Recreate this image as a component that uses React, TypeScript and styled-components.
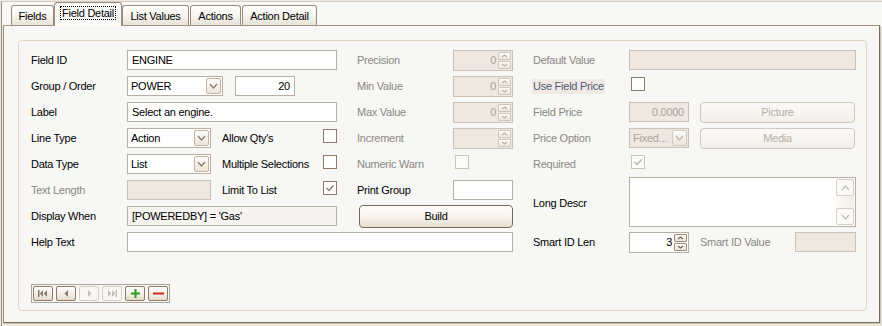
import React from 'react';
import styled, { createGlobalStyle, css } from 'styled-components';

const GlobalStyle = createGlobalStyle`
  html, body { margin: 0; padding: 0; background: #ebe8df; }
  body {
    font-family: "Liberation Sans", Arial, sans-serif;
    font-size: 11px;
    letter-spacing: -0.25px;
    color: #000;
  }
  * { box-sizing: border-box; }
`;

const GRAY = '#8a8783';

const Window = styled.div`
  width: 882px;
  height: 326px;
  display: flex;
  flex-direction: column;
  padding: 1px 0 0 1px;
  background: #ebe8df;
`;

const Surface = styled.div`
  flex: 1;
  display: flex;
  flex-direction: column;
  border-top: 1px solid #d4ccc1;
  border-left: 1px solid #9d8f7e;
  padding: 0 2px 3px 1px;
  background: linear-gradient(#f8f8f7, #f8f8f7) top / 100% 24px no-repeat, #ebe8df;
`;

const TabStrip = styled.div`
  height: 23px;
  display: flex;
  align-items: flex-end;
  gap: 1px;
  padding-left: 8px;
  position: relative;
  z-index: 1;
`;

const Tab = styled.div<{ $w: number; $active?: boolean }>`
  width: ${(p) => p.$w}px;
  height: 20px;
  display: flex;
  align-items: center;
  justify-content: center;
  border: 1px solid #9c8c78;
  border-bottom: none;
  border-radius: 3px 3px 0 0;
  background: linear-gradient(#ffffff, #f5f3ee 55%, #e7e2d6);
  white-space: nowrap;
  ${(p) =>
    p.$active &&
    css`
      width: ${p.$w + 2}px;
      height: 24px;
      margin: 0 -1px -1px;
      padding-bottom: 3px;
      background: #fbfbfa;
    `}
`;

const FocusText = styled.span`
  outline: 1px dotted #000;
  outline-offset: 0;
  padding: 0 1px;
`;

const Panel = styled.div`
  flex: 1;
  display: flex;
  background: #f7f7f6;
  border: 1px solid #a09281;
  border-right-color: #7c6c5a;
  border-bottom-color: #7c6c5a;
  box-shadow: 1px 1px 0 #cdc4b6;
  padding: 14px 12px 11px 14px;
`;

const GroupBox = styled.div`
  flex: 1;
  display: flex;
  flex-direction: column;
  border: 1px solid #e3d7c3;
  border-radius: 4px;
  padding: 6px 0 0 12px;
`;

const Form = styled.div`
  display: grid;
  grid-template-columns: 96px 210px 20px 96px 60px 20px 96px 227px;
  grid-auto-rows: 26px;
  align-items: center;
`;

const Slot = styled.div<{ $c: number; $r: number; $span?: number; $rows?: number; $top?: boolean }>`
  grid-column: ${(p) => p.$c} / span ${(p) => p.$span ?? 1};
  grid-row: ${(p) => p.$r} / span ${(p) => p.$rows ?? 1};
  display: flex;
  align-items: center;
  align-self: ${(p) => (p.$top ? 'start' : 'center')};
  min-width: 0;
`;

const Label = styled.span<{ $disabled?: boolean; $highlight?: boolean }>`
  white-space: nowrap;
  color: ${(p) => (p.$disabled ? GRAY : '#000')};
  ${(p) =>
    p.$highlight &&
    css`
      color: #4f5873;
      background: #efebe4;
      margin-left: -1px;
      padding: 1px 1px 2px;
    `}
`;

const InlineLabel = styled(Label)<{ $grow?: boolean }>`
  margin-left: 11px;
  flex: ${(p) => (p.$grow ? 1 : 'none')};
`;

type Variant = 'normal' | 'readonly' | 'disabled';

const boxBg = (v: Variant = 'normal') =>
  v === 'disabled' ? '#eee8e1' : v === 'readonly' ? '#f5f4f1' : '#fff';

const TextBox = styled.div<{ $w?: number; $variant?: Variant; $right?: boolean; $ml?: number }>`
  flex: none;
  width: ${(p) => (p.$w ? `${p.$w}px` : '100%')};
  height: 20px;
  margin-left: ${(p) => p.$ml ?? 0}px;
  display: flex;
  align-items: center;
  justify-content: ${(p) => (p.$right ? 'flex-end' : 'flex-start')};
  padding: 0 4px;
  border: 1px solid ${(p) => (p.$variant === 'disabled' ? '#cbc2b7' : '#b8afa4')};
  background: ${(p) => boxBg(p.$variant)};
  color: ${(p) => (p.$variant === 'disabled' ? '#aaa39a' : '#000')};
  white-space: nowrap;
  overflow: hidden;
`;

const SelectBox = styled.div<{ $w: number; $disabled?: boolean }>`
  flex: none;
  width: ${(p) => p.$w}px;
  height: 20px;
  display: flex;
  align-items: center;
  padding: 0 1px 0 3px;
  border: 1px solid ${(p) => (p.$disabled ? '#cbc2b7' : '#b8afa4')};
  background: ${(p) => (p.$disabled ? '#eee8e1' : '#fff')};
  color: ${(p) => (p.$disabled ? '#aaa39a' : '#000')};
`;

const SelectText = styled.span`
  flex: 1;
  white-space: nowrap;
  overflow: hidden;
`;

const DropButton = styled.span<{ $disabled?: boolean }>`
  width: 15px;
  height: 16px;
  display: flex;
  align-items: center;
  justify-content: center;
  border: 1px solid ${(p) => (p.$disabled ? '#d3cbc0' : '#c3b39f')};
  border-radius: 2px;
  background: linear-gradient(#fdfcfa, #ece5d8);
`;

const Spinner = styled.div<{ $disabled?: boolean }>`
  flex: none;
  width: 60px;
  height: 21px;
  display: flex;
  align-items: center;
  padding: 0 1px 0 3px;
  border: 1px solid ${(p) => (p.$disabled ? '#cbc2b7' : '#b8afa4')};
  background: ${(p) => (p.$disabled ? '#eee8e1' : '#fff')};
  color: ${(p) => (p.$disabled ? '#aaa39a' : '#000')};
`;

const SpinValue = styled.span`
  flex: 1;
  text-align: right;
  padding-right: 2px;
`;

const SpinColumn = styled.span`
  display: flex;
  flex-direction: column;
  gap: 1px;
`;

const SpinButton = styled.span<{ $disabled?: boolean }>`
  width: 13px;
  height: 8px;
  display: flex;
  align-items: center;
  justify-content: center;
  border: 1px solid ${(p) => (p.$disabled ? '#cfc6bb' : '#9f8c77')};
  border-radius: 1px;
  background: linear-gradient(#fdfcfa, #ece5d8);
`;

const CheckBox = styled.span<{ $disabled?: boolean; $ml?: number }>`
  flex: none;
  width: 14px;
  height: 14px;
  margin-left: ${(p) => p.$ml ?? 0}px;
  margin-bottom: 4px;
  display: flex;
  align-items: center;
  justify-content: center;
  border: 1px solid ${(p) => (p.$disabled ? '#cdc4b8' : '#8e7b67')};
  background: ${(p) => (p.$disabled ? '#fbfbfa' : '#fff')};
`;

const PushButton = styled.div<{ $w: number; $h?: number; $disabled?: boolean; $ml?: number }>`
  flex: none;
  width: ${(p) => p.$w}px;
  height: ${(p) => p.$h ?? 21}px;
  margin-left: ${(p) => p.$ml ?? 0}px;
  display: flex;
  align-items: center;
  justify-content: center;
  border: 1px solid ${(p) => (p.$disabled ? '#d0c7bb' : '#7d6a56')};
  border-radius: 4px;
  background: ${(p) =>
    p.$disabled ? 'linear-gradient(#fbfaf8, #f2efe9)' : 'linear-gradient(#ffffff, #f4f0e7 60%, #e6dfcf)'};
  color: ${(p) => (p.$disabled ? '#b6afa5' : '#000')};
`;

const TextArea = styled.div`
  width: 100%;
  height: 50px;
  display: flex;
  justify-content: flex-end;
  padding: 1px 1px 1px 0;
  border: 1px solid #b8afa4;
  background: #fff;
`;

const ScrollBar = styled.div`
  width: 18px;
  display: flex;
  flex-direction: column;
  justify-content: space-between;
  background: linear-gradient(90deg, #fbfaf7, #f2eee6);
`;

const ScrollButton = styled.span`
  width: 18px;
  height: 17px;
  display: flex;
  align-items: center;
  justify-content: center;
  border: 1px solid #d6cfc5;
  border-radius: 2px;
  background: #fbfaf8;
`;

const NavBar = styled.div`
  margin-top: 29px;
  align-self: flex-start;
  display: flex;
  gap: 3px;
  padding: 1px;
  border: 1px solid #aba59c;
`;

const NavButton = styled.span<{ $disabled?: boolean }>`
  width: 20px;
  height: 15px;
  display: flex;
  align-items: center;
  justify-content: center;
  border: 1px solid ${(p) => (p.$disabled ? '#d6cfc5' : '#8e7a66')};
  border-radius: 2px;
  background: ${(p) => (p.$disabled ? '#f8f7f4' : 'linear-gradient(#ffffff, #f1ece2 60%, #e4dccd)')};
`;

const Chevron = ({ dir = 'down', color = '#8a7a68', w = 9, h = 6 }: { dir?: 'up' | 'down'; color?: string; w?: number; h?: number }) => (
  <svg width={w} height={h} viewBox={`0 0 ${w} ${h}`}>
    <polyline
      points={
        dir === 'down'
          ? `1,1 ${w / 2},${h - 1} ${w - 1},1`
          : `1,${h - 1} ${w / 2},1 ${w - 1},${h - 1}`
      }
      fill="none"
      stroke={color}
      strokeWidth="1.2"
    />
  </svg>
);

const Tick = ({ color }: { color: string }) => (
  <svg width="10" height="10" viewBox="0 0 10 10">
    <polyline points="1.5,5 4,7.5 8.5,2.5" fill="none" stroke={color} strokeWidth="1.3" />
  </svg>
);

const Select = ({ w, value, disabled }: { w: number; value: string; disabled?: boolean }) => (
  <SelectBox $w={w} $disabled={disabled}>
    <SelectText>{value}</SelectText>
    <DropButton $disabled={disabled}>
      <Chevron color={disabled ? '#bdb4a8' : '#8a7a68'} />
    </DropButton>
  </SelectBox>
);

const Spin = ({ value, disabled }: { value: string; disabled?: boolean }) => {
  const glyph = disabled ? '#b9b0a4' : '#6f604f';
  return (
    <Spinner $disabled={disabled}>
      <SpinValue>{value}</SpinValue>
      <SpinColumn>
        <SpinButton $disabled={disabled}>
          <Chevron dir="up" w={7} h={4} color={glyph} />
        </SpinButton>
        <SpinButton $disabled={disabled}>
          <Chevron w={7} h={4} color={glyph} />
        </SpinButton>
      </SpinColumn>
    </Spinner>
  );
};

const Check = ({ checked, disabled, ml }: { checked?: boolean; disabled?: boolean; ml?: number }) => (
  <CheckBox $disabled={disabled} $ml={ml}>
    {checked && <Tick color={disabled ? '#b9b0a3' : '#8a7866'} />}
  </CheckBox>
);

type NavIcon = 'first' | 'prev' | 'next' | 'last' | 'add' | 'remove';

const NavGlyph = ({ kind, color }: { kind: NavIcon; color: string }) => {
  switch (kind) {
    case 'first':
      return (
        <svg width="10" height="7" viewBox="0 0 10 7" fill={color}>
          <rect x="0" y="0" width="1.5" height="7" />
          <polygon points="5,0 1.8,3.5 5,7" />
          <polygon points="9,0 5.8,3.5 9,7" />
        </svg>
      );
    case 'prev':
      return (
        <svg width="5" height="7" viewBox="0 0 5 7" fill={color}>
          <polygon points="4,0 0.5,3.5 4,7" />
        </svg>
      );
    case 'next':
      return (
        <svg width="5" height="7" viewBox="0 0 5 7" fill={color}>
          <polygon points="1,0 4.5,3.5 1,7" />
        </svg>
      );
    case 'last':
      return (
        <svg width="10" height="7" viewBox="0 0 10 7" fill={color}>
          <polygon points="1,0 4.2,3.5 1,7" />
          <polygon points="5,0 8.2,3.5 5,7" />
          <rect x="8.5" y="0" width="1.5" height="7" />
        </svg>
      );
    case 'add':
      return (
        <svg width="9" height="9" viewBox="0 0 9 9" fill="#2e9a1f">
          <rect x="3.5" y="0" width="2" height="9" />
          <rect x="0" y="3.5" width="9" height="2" />
        </svg>
      );
    default:
      return (
        <svg width="11" height="3" viewBox="0 0 11 3" fill="#d4241d">
          <rect x="0" y="0.5" width="11" height="2" />
        </svg>
      );
  }
};

const TABS = [
  { title: 'Fields', w: 43 },
  { title: 'Field Detail', w: 66, active: true },
  { title: 'List Values', w: 67 },
  { title: 'Actions', w: 51 },
  { title: 'Action Detail', w: 75 },
];

const NAV: { kind: NavIcon; disabled?: boolean }[] = [
  { kind: 'first' },
  { kind: 'prev' },
  { kind: 'next', disabled: true },
  { kind: 'last', disabled: true },
  { kind: 'add' },
  { kind: 'remove' },
];

const App: React.FC = () => (
  <>
    <GlobalStyle />
    <Window>
      <Surface>
        <TabStrip>
          {TABS.map((t) => (
            <Tab key={t.title} $w={t.w} $active={t.active}>
              {t.active ? <FocusText>{t.title}</FocusText> : t.title}
            </Tab>
          ))}
        </TabStrip>
        <Panel>
          <GroupBox>
            <Form>
              {/* left column */}
              <Slot $c={1} $r={1}><Label>Field ID</Label></Slot>
              <Slot $c={2} $r={1}><TextBox>ENGINE</TextBox></Slot>

              <Slot $c={1} $r={2}><Label>Group / Order</Label></Slot>
              <Slot $c={2} $r={2}>
                <Select w={96} value="POWER" />
                <TextBox $w={60} $ml={12} $right>20</TextBox>
              </Slot>

              <Slot $c={1} $r={3}><Label>Label</Label></Slot>
              <Slot $c={2} $r={3}><TextBox>Select an engine.</TextBox></Slot>

              <Slot $c={1} $r={4}><Label>Line Type</Label></Slot>
              <Slot $c={2} $r={4}>
                <Select w={84} value="Action" />
                <InlineLabel $grow>Allow Qty's</InlineLabel>
                <Check />
              </Slot>

              <Slot $c={1} $r={5}><Label>Data Type</Label></Slot>
              <Slot $c={2} $r={5}>
                <Select w={84} value="List" />
                <InlineLabel $grow>Multiple Selections</InlineLabel>
                <Check />
              </Slot>

              <Slot $c={1} $r={6}><Label $disabled>Text Length</Label></Slot>
              <Slot $c={2} $r={6}>
                <TextBox $w={84} $variant="disabled" />
                <InlineLabel $grow>Limit To List</InlineLabel>
                <Check checked />
              </Slot>

              <Slot $c={1} $r={7}><Label>Display When</Label></Slot>
              <Slot $c={2} $r={7}><TextBox $variant="readonly">[POWEREDBY] = 'Gas'</TextBox></Slot>

              <Slot $c={1} $r={8}><Label>Help Text</Label></Slot>
              <Slot $c={2} $r={8} $span={4}><TextBox /></Slot>

              {/* middle column */}
              <Slot $c={4} $r={1}><Label $disabled>Precision</Label></Slot>
              <Slot $c={5} $r={1}><Spin value="0" disabled /></Slot>
              <Slot $c={4} $r={2}><Label $disabled>Min Value</Label></Slot>
              <Slot $c={5} $r={2}><Spin value="0" disabled /></Slot>
              <Slot $c={4} $r={3}><Label $disabled>Max Value</Label></Slot>
              <Slot $c={5} $r={3}><Spin value="0" disabled /></Slot>
              <Slot $c={4} $r={4}><Label $disabled>Increment</Label></Slot>
              <Slot $c={5} $r={4}><Spin value="" disabled /></Slot>
              <Slot $c={4} $r={5}><Label $disabled>Numeric Warn</Label></Slot>
              <Slot $c={5} $r={5}><Check disabled ml={2} /></Slot>
              <Slot $c={4} $r={6}><Label>Print Group</Label></Slot>
              <Slot $c={5} $r={6}><TextBox $w={60} /></Slot>
              <Slot $c={4} $r={7} $span={2}>
                <PushButton $w={154} $h={23} $ml={2}>Build</PushButton>
              </Slot>

              {/* right column */}
              <Slot $c={7} $r={1}><Label $disabled>Default Value</Label></Slot>
              <Slot $c={8} $r={1}><TextBox $variant="disabled" /></Slot>

              <Slot $c={7} $r={2}><Label $highlight>Use Field Price</Label></Slot>
              <Slot $c={8} $r={2}><Check ml={2} /></Slot>

              <Slot $c={7} $r={3}><Label $disabled>Field Price</Label></Slot>
              <Slot $c={8} $r={3}>
                <TextBox $w={60} $variant="disabled" $right>0.0000</TextBox>
                <PushButton $w={155} $ml={11} $disabled>Picture</PushButton>
              </Slot>

              <Slot $c={7} $r={4}><Label $disabled>Price Option</Label></Slot>
              <Slot $c={8} $r={4}>
                <Select w={60} value="Fixed..." disabled />
                <PushButton $w={155} $ml={11} $disabled>Media</PushButton>
              </Slot>

              <Slot $c={7} $r={5}><Label $disabled>Required</Label></Slot>
              <Slot $c={8} $r={5}><Check checked disabled ml={2} /></Slot>

              <Slot $c={7} $r={6} $rows={2}><Label>Long Descr</Label></Slot>
              <Slot $c={8} $r={6} $rows={2} $top>
                <TextArea>
                  <ScrollBar>
                    <ScrollButton><Chevron dir="up" color="#c3bbb0" /></ScrollButton>
                    <ScrollButton><Chevron color="#c3bbb0" /></ScrollButton>
                  </ScrollBar>
                </TextArea>
              </Slot>

              <Slot $c={7} $r={8}><Label>Smart ID Len</Label></Slot>
              <Slot $c={8} $r={8}>
                <Spin value="3" />
                <InlineLabel $disabled $grow>Smart ID Value</InlineLabel>
                <TextBox $w={61} $variant="disabled" />
              </Slot>
            </Form>

            <NavBar>
              {NAV.map((n) => (
                <NavButton key={n.kind} $disabled={n.disabled}>
                  <NavGlyph kind={n.kind} color={n.disabled ? '#c6beb3' : '#8a7b6a'} />
                </NavButton>
              ))}
            </NavBar>
          </GroupBox>
        </Panel>
      </Surface>
    </Window>
  </>
);

export default App;
